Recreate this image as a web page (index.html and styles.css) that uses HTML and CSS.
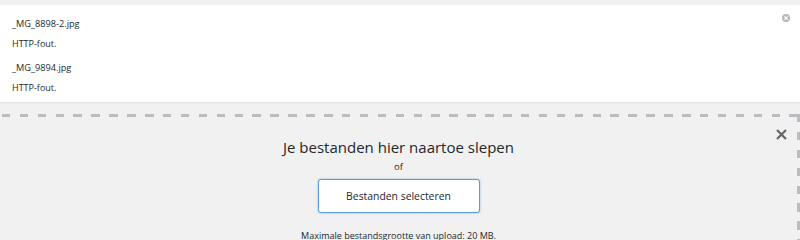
FILE: index.html
```html
<!doctype html>
<html lang="nl">
<head>
	<meta charset="UTF-8">
	<title>Media uploaden</title>
	<link rel="stylesheet" href="styles.css">
</head>
<body>

<div class="upload-errors">
	<button class="dismiss" type="button" aria-label="Sluiten">
		<svg width="8" height="8" viewBox="0 0 8 8"><circle cx="4" cy="4" r="4" fill="#b4b9be"/><path d="M2.4 2.4 L5.6 5.6 M5.6 2.4 L2.4 5.6" stroke="#ffffff" stroke-width="1.2"/></svg>
	</button>
	<div class="upload-error">
		<div class="error-file">_MG_8898-2.jpg</div>
		<div class="error-msg">HTTP-fout.</div>
	</div>
	<div class="upload-error">
		<div class="error-file">_MG_9894.jpg</div>
		<div class="error-msg">HTTP-fout.</div>
	</div>
</div>

<div class="uploader">
	<button class="close" type="button" aria-label="Sluiten">
		<svg width="11" height="11" viewBox="0 0 11 11"><path d="M1 1 L10 10 M10 1 L1 10" stroke="#666666" stroke-width="2.2"/></svg>
	</button>
	<div class="drop-inside">
		<p class="drop-title">Je bestanden hier naartoe slepen</p>
		<p class="drop-or">of</p>
		<button class="browse" type="button">Bestanden selecteren</button>
		<p class="max-size">Maximale bestandsgrootte van upload: 20 MB.</p>
	</div>
</div>

</body>
</html>
```

FILE: styles.css
```css
body { margin: 0; background: #f1f1f1; font-family: "Open Sans", "Liberation Sans", sans-serif; color: #23282d; }
p { margin: 0; }
button { font-family: inherit; }

.upload-errors { position: relative; margin-top: 5px; background: #ffffff; padding: 9px 12px 4px; box-shadow: 0 1px 1px rgba(0, 0, 0, 0.06); }
.upload-errors .dismiss { position: absolute; top: 9px; right: 10px; padding: 0; border: 0; background: none; line-height: 0; }
.upload-error + .upload-error { margin-top: 4px; }
.error-file { font-size: 9.2px; line-height: 20px; color: #23282d; }
.error-msg { font-size: 9px; line-height: 20px; color: #23282d; }

.uploader { position: relative; margin-top: 12px; height: 123px; padding: 3px 3px 0 0;
	background:
		repeating-linear-gradient(90deg, transparent 0, transparent 1.9px, #b9bdc1 1.9px, #b9bdc1 10.4px, transparent 10.4px, transparent 17.9px) top left / 100% 3px no-repeat,
		repeating-linear-gradient(180deg, #b9bdc1 0, #b9bdc1 8.5px, transparent 8.5px, transparent 17.9px) top right / 3px 100% no-repeat;
}
.uploader .close { position: absolute; top: 15px; right: 13px; padding: 0; border: 0; background: none; line-height: 0; }
.drop-inside { display: flex; flex-direction: column; align-items: center; padding-top: 20px; }
.drop-title { font-size: 15px; line-height: 20px; color: #23282d; }
.drop-or { font-size: 9.5px; line-height: 20px; color: #23282d; }
.browse { margin-top: 2px; width: 162px; height: 34px; background: #ffffff; border: 1px solid #5b9dd9; border-radius: 3px; box-shadow: 0 0 2px rgba(30, 140, 190, 0.6); font-size: 10.4px; color: #23282d; }
.max-size { margin-top: 13px; font-size: 9px; line-height: 20px; color: #23282d; }
```
